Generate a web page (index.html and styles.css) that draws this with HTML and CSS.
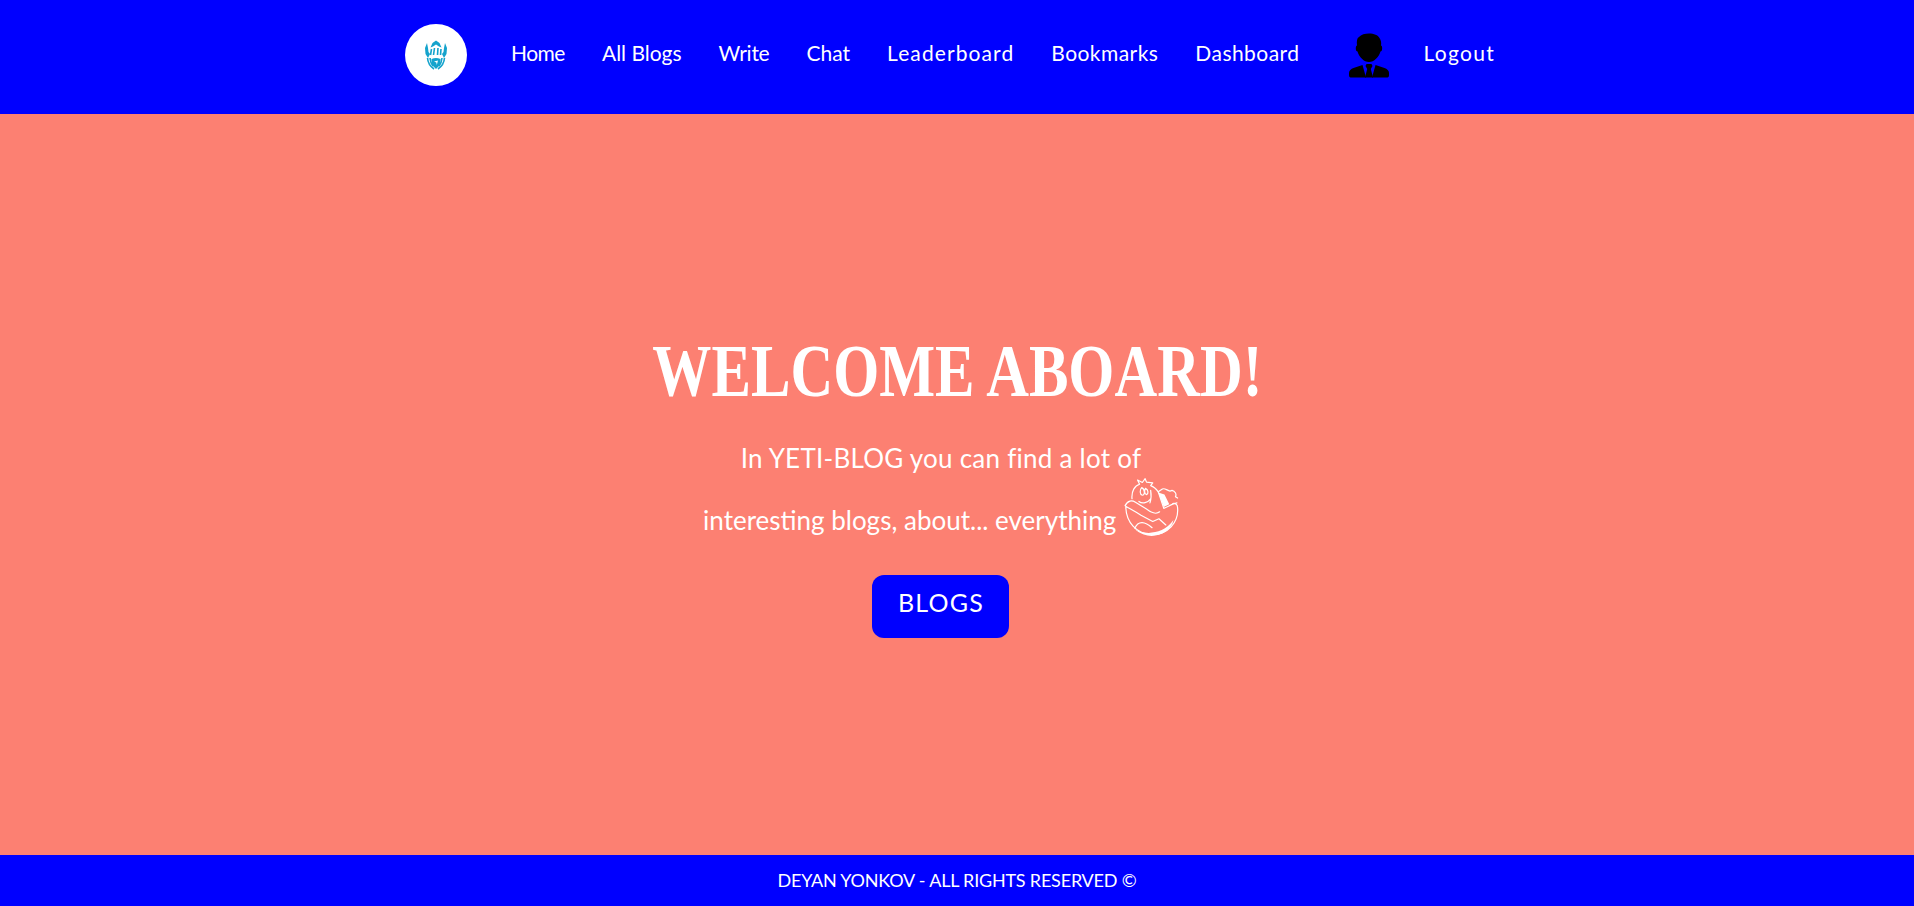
FILE: index.html
```html
<!DOCTYPE html>
<html lang="en">
<head>
<meta charset="utf-8">
<title>YETI-BLOG</title>
<link rel="stylesheet" href="styles.css">
</head>
<body>
<header class="nav">
  <a class="logo" href="#">
    <svg class="logo-mark" viewBox="0 0 24 30" aria-hidden="true">
      <path class="logo-fill" d="M12 0.5 L15.5 3 L17.5 7.5 L15 6.5 L12 4.5 L9 6.5 L6.5 7.5 L8.5 3 Z M3 3 L1 8 L1.5 14 L4 18 L6 14 L4.5 12 L4 8 Z M21 3 L23 8 L22.5 14 L20 18 L18 14 L19.5 12 L20 8 Z"/>
      <path class="logo-line" d="M7.5 9 L6.5 15 M10.5 8 L9.5 15 M14 8 L13.5 15 M17 9 L16.5 15 M3.5 18 Q4 25 10 29 M20.5 18 Q20 25 14 29 M6 18 Q6.5 23 9 26 M18 18 Q17.5 23 15 26"/>
      <path class="logo-fill" d="M7.5 19 Q12 17 16.5 19 L16 25 L12 29 L8 25 Z"/>
      <path class="logo-cut" d="M10 21.5 L14 20.5 L12.8 25 L12.3 22.5 Z"/>
    </svg>
  </a>
  <a class="nav-link nav-link-home" href="#">Home</a>
  <a class="nav-link" href="#">All Blogs</a>
  <a class="nav-link nav-link-narrow" href="#">Write</a>
  <a class="nav-link" href="#">Chat</a>
  <a class="nav-link nav-link-wider" href="#">Leaderboard</a>
  <a class="nav-link nav-link-wide" href="#">Bookmarks</a>
  <a class="nav-link nav-link-wide" href="#">Dashboard</a>
  <a class="avatar" href="#">
    <svg viewBox="0 0 40 45" aria-hidden="true">
      <path d="M20 0.5 C25 0.5 29 2 30.5 5 C32 7 32.5 10 32 12.5 C33.5 12.5 33.5 17 32.5 18 L31.5 18.5 C30 24 25 29 20 29 C15 29 10 24 8.5 18.5 L7.5 18 C6.5 17 6.5 12.5 8 12.5 C7.5 8 8 5 10 4 C12 1.5 16 0.5 20 0.5 Z"/>
      <path d="M17.5 31 H22.5 L23.5 33 L21.8 36 L24 44.5 H16 L18.2 36 L16.5 33 Z"/>
      <path d="M13.5 32 L17 44.5 H1.5 C0.5 44.5 0 43.5 0 42 V40 C0 37.5 2 36 4.5 35 Z"/>
      <path d="M26.5 32 L23 44.5 H38.5 C39.5 44.5 40 43.5 40 42 V40 C40 37.5 38 36 35.5 35 Z"/>
    </svg>
  </a>
  <a class="nav-link nav-link-widest" href="#">Logout</a>
</header>

<main class="hero">
  <h1 class="hero-title">WELCOME ABOARD!</h1>
  <div class="hero-body">
    <p class="hero-text"><span class="hero-line-first">In YETI-BLOG you can find a lot of</span><br>interesting blogs, about... everything <svg class="yeti" viewBox="36 24 162 168" aria-hidden="true">
      <path class="yeti-line" d="M62 84 C60 62 70 46 84 42 L78 30 L92 37 L100 26 L104 36 L122 38 L116 46 C128 50 134 58 138 64 L150 56 C156 52 164 60 172 62 L178 60 C186 62 192 70 188 78 L194 82"/>
      <path class="yeti-line" d="M90 52 C84 58 84 72 92 74 C100 74 100 56 90 52 Z M101 54 C97 60 98 70 104 72 C110 70 110 58 101 54 Z M82 92 C92 100 108 96 116 84 M116 60 C118 72 118 84 114 96"/>
      <path class="yeti-line" d="M42 104 C50 88 62 88 72 94 L104 114 C116 124 132 130 142 122 M138 64 L154 112 C168 106 180 98 192 96 M44 106 C44 150 74 188 122 188 C164 188 198 154 194 110 C194 100 186 96 180 98 M44 106 C54 112 70 120 88 132 L122 150 L140 142 L160 160 M70 170 C80 146 100 150 120 168"/>
      <path class="yeti-fill" d="M70 172 C92 188 150 192 182 146 C176 182 130 200 96 188 C84 184 76 178 70 172 Z M138 66 L154 108 L170 100 L156 72 Z"/>
    </svg></p>
    <a class="hero-btn" href="#">BLOGS</a>
  </div>
</main>

<footer class="footer">DEYAN YONKOV - ALL RIGHTS RESERVED ©</footer>
</body>
</html>
```

FILE: styles.css
```css
* { box-sizing: border-box; }
html, body { height: 100%; }
body {
  margin: 0;
  display: flex;
  flex-direction: column;
  height: 906px;
  overflow: hidden;
  background: #fc8072;
  color: #fff;
  font-family: "Lato", "Open Sans", sans-serif;
}
a { color: inherit; text-decoration: none; }

.nav {
  height: 114px;
  flex: none;
  background: #0000ff;
  display: flex;
  align-items: center;
  justify-content: center;
  gap: 37px;
  padding-right: 14px;
}
.nav-link {
  font-size: 21px;
  line-height: 26px;
  margin-top: -8px;
}
.nav-link-home { letter-spacing: -0.5px; }
.nav-link-narrow { letter-spacing: -0.25px; }
.nav-link-wide { letter-spacing: 0.45px; }
.nav-link-wider { letter-spacing: 1.1px; }
.nav-link-widest { letter-spacing: 1.3px; }
.logo {
  width: 62px;
  height: 62px;
  border-radius: 50%;
  background: #fff;
  display: flex;
  align-items: center;
  justify-content: center;
  margin-right: 7px;
  margin-top: -4px;
}
.logo-mark { width: 24px; height: 30px; }
.logo-fill { fill: #14a3cc; }
.logo-line { fill: none; stroke: #14a3cc; stroke-width: 1.6; }
.logo-cut { fill: #fff; }
.avatar { width: 40px; height: 45px; margin-left: 13px; margin-right: -3px; margin-top: -4px; display: block; }
.avatar svg { width: 40px; height: 45px; display: block; }

.hero {
  flex: 1;
  display: flex;
  flex-direction: column;
  align-items: center;
  padding-top: 219px;
}
.hero-title {
  margin: 0;
  font-family: "Liberation Serif", serif;
  font-weight: 700;
  font-size: 74px;
  line-height: 76px;
  transform: scaleX(0.8);
  white-space: nowrap;
}
.hero-body {
  margin-top: 18px;
  padding-right: 32px;
  display: flex;
  flex-direction: column;
  align-items: center;
}
.hero-text {
  margin: 0;
  font-size: 26px;
  line-height: 62px;
  text-align: center;
}
.hero-line-first { letter-spacing: 0.25px; }
.yeti { width: 56px; height: 58px; margin-top: -20px; vertical-align: -6px; }
.yeti-line { fill: none; stroke: #fff; stroke-width: 3.5; stroke-linejoin: round; stroke-linecap: round; }
.yeti-fill { fill: #fff; }
.hero-btn {
  margin-top: 24px;
  width: 137px;
  height: 63px;
  padding-top: 12px;
  border-radius: 12px;
  background: #0000ff;
  text-align: center;
  font-size: 25px;
  letter-spacing: 1.2px;
  line-height: 30px;
}
.footer {
  height: 51px;
  flex: none;
  background: #0000ff;
  display: flex;
  align-items: center;
  justify-content: center;
  padding-bottom: 2px;
  font-size: 18px;
  letter-spacing: -0.2px;
}
```
